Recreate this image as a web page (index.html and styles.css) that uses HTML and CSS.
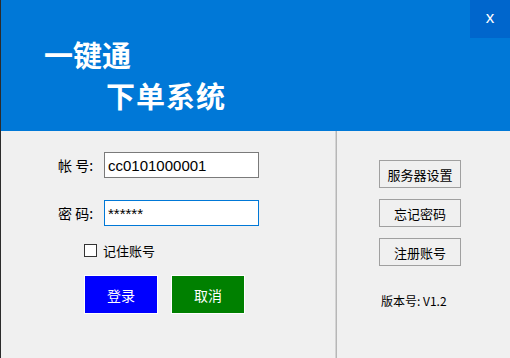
FILE: index.html
```html
<!DOCTYPE html>
<html lang="zh-CN">
<head>
    <meta charset="UTF-8">
    <title>一键通下单系统</title>
    <link rel="stylesheet" href="styles.css">
</head>
<body>
    <div class="window">
        <div class="header">
            <div class="title1">一键通</div>
            <div class="title2">下单系统</div>
            <div class="close">x</div>
        </div>

        <div class="main">
            <div class="left">
                <div class="form-row">
                    <label>帐&nbsp;号:</label>
                    <input type="text" class="field" value="cc0101000001">
                </div>
                <div class="form-row">
                    <label>密&nbsp;码:</label>
                    <input type="text" class="field active" value="******">
                </div>
                <div class="remember">
                    <span class="box"></span>
                    <span>记住账号</span>
                </div>
                <div class="actions">
                    <button class="btn-login">登录</button>
                    <button class="btn-cancel">取消</button>
                </div>
            </div>

            <div class="divider"></div>

            <div class="right">
                <button class="side-btn">服务器设置</button>
                <button class="side-btn">忘记密码</button>
                <button class="side-btn">注册账号</button>
                <div class="version">版本号: V1.2</div>
            </div>
        </div>
    </div>
</body>
</html>
```

FILE: styles.css
```css
body {
    margin: 0;
    font-family: "Liberation Sans", "Noto Sans CJK SC", sans-serif;
    background-color: #f0f0f0;
}
.window {
    width: 510px;
    height: 358px;
    display: flex;
    flex-direction: column;
    border-left: 1px solid #2b2b2b;
    box-sizing: border-box;
}
.header {
    height: 131px;
    background-color: #0078d7;
    color: white;
    position: relative;
    box-sizing: border-box;
    padding-top: 39px;
}
.title1 {
    font-size: 29px;
    font-weight: bold;
    margin-left: 43px;
    line-height: 36px;
}
.title2 {
    font-size: 29px;
    font-weight: bold;
    margin-left: 105px;
    margin-top: 5px;
    line-height: 36px;
    letter-spacing: 1px;
}
.close {
    position: absolute;
    top: 0;
    right: 0;
    width: 40px;
    height: 38px;
    background-color: #0066cc;
    text-align: center;
    line-height: 36px;
    font-size: 17px;
}
.main {
    flex: 1;
    display: flex;
}
.left {
    width: 333px;
    padding-top: 21px;
    box-sizing: border-box;
}
.form-row {
    display: flex;
    align-items: center;
    height: 26px;
    margin-bottom: 22px;
    padding-left: 57px;
}
.form-row label {
    width: 46px;
    font-size: 14px;
    color: #000;
    font-family: "Noto Sans CJK SC", sans-serif;
}
.field {
    width: 155px;
    height: 26px;
    box-sizing: border-box;
    border: 1px solid #7a7a7a;
    padding: 0 3px;
    font-size: 15px;
    font-family: "Liberation Sans", sans-serif;
    outline: none;
}
.field.active {
    border-color: #0078d7;
}
.remember {
    display: flex;
    align-items: center;
    margin-top: -7px;
    padding-left: 83px;
    font-size: 13px;
    font-family: "Noto Sans CJK SC", sans-serif;
}
.box {
    width: 11px;
    height: 11px;
    border: 1px solid #333;
    background: white;
    margin-right: 6px;
}
.actions {
    display: flex;
    gap: 13px;
    margin-top: 15px;
    padding-left: 83px;
}
.actions button {
    width: 74px;
    height: 39px;
    border: 1px solid white;
    color: white;
    font-size: 14px;
    font-family: "Noto Sans CJK SC", sans-serif;
}
.btn-login {
    background-color: #0000ff;
}
.btn-cancel {
    background-color: #008000;
}
.divider {
    width: 3px;
    background: linear-gradient(to right, #ffffff, #a8a8a8);
}
.right {
    flex: 1;
    display: flex;
    flex-direction: column;
    align-items: flex-start;
    padding-top: 29px;
    padding-left: 42px;
}
.side-btn {
    width: 82px;
    height: 28px;
    margin-bottom: 11px;
    border: 1px solid #a0a0a0;
    background-color: #f0f0f0;
    font-size: 13px;
    font-family: "Noto Sans CJK SC", sans-serif;
    padding: 0;
}
.version {
    margin-top: 15px;
    margin-left: 2px;
    font-size: 12px;
    font-family: "Noto Sans CJK SC", sans-serif;
}
```
